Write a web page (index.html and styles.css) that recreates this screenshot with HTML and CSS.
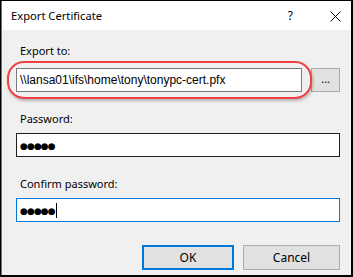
FILE: index.html
```html
<!DOCTYPE html>
<html lang="en">
  <head>
    <meta charset="UTF-8" />
    <title>Export Certificate</title>
    <link rel="stylesheet" href="styles.css">
  </head>
  <body>
    <div class="window">
      <!-- Title bar -->
      <div class="titlebar">
        <span class="title">Export Certificate</span>
        <span class="help">?</span>
        <svg class="close" width="11" height="11" viewBox="0 0 11 11">
          <path d="M0.5 0.5 L10.5 10.5 M10.5 0.5 L0.5 10.5" stroke="#000" stroke-width="1" fill="none" />
        </svg>
      </div>

      <div class="content">
        <div class="field first">
          <div class="label">Export to:</div>
          <div class="path-row">
            <div class="textbox path">\\lansa01\ifs\home\tony\tonypc-cert.pfx</div>
            <div class="browse">...</div>
            <div class="highlight"></div>
          </div>
        </div>

        <div class="field">
          <div class="label">Password:</div>
          <div class="textbox dark"><span class="dots">●●●●●</span></div>
        </div>

        <div class="field">
          <div class="label">Confirm password:</div>
          <div class="textbox focused"><span class="dots">●●●●●</span><span class="caret"></span></div>
        </div>

        <div class="actions">
          <div class="btn default">OK</div>
          <div class="btn">Cancel</div>
        </div>
      </div>
    </div>
  </body>
</html>
```

FILE: styles.css
```css
* {
  box-sizing: border-box;
}
body {
  margin: 0;
  font-family: "Noto Sans", "Open Sans", sans-serif;
  font-size: 11px;
  color: #000;
  background: #fff;
}
.window {
  width: 353px;
  height: 277px;
  border-top: 1px solid #000;
  border-left: 1px solid #000;
  border-right: 2px solid #000;
  border-bottom: 2px solid #000;
  background: #f0f0f0;
  box-shadow: inset 1px 0 0 #e8483e;
  display: flex;
  flex-direction: column;
}
.titlebar {
  height: 29px;
  background: #fff;
  margin-left: 1px;
  display: flex;
  align-items: center;
  padding-left: 9px;
}
.title {
  flex: 1;
  font-size: 11.2px;
  line-height: 16px;
}
.help {
  font-size: 12px;
  margin-right: 37px;
}
.close {
  margin-right: 10px;
  margin-top: 1px;
}
.content {
  flex: 1;
  padding: 13px 11px 0 15px;
  display: flex;
  flex-direction: column;
}
.label {
  line-height: 16px;
  padding-left: 4px;
  margin-bottom: 6px;
}
.field {
  margin-bottom: 19px;
}
.field.first .label {
  margin-bottom: 9px;
}
.path-row {
  position: relative;
  display: flex;
  gap: 9px;
}
.textbox {
  height: 24px;
  background: #fff;
  border: 1px solid #7a7a7a;
  padding-left: 3px;
  display: flex;
  align-items: center;
  line-height: 16px;
  white-space: nowrap;
}
.textbox.path {
  width: 289px;
  font-family: "Liberation Sans", Arial, sans-serif;
  font-size: 12px;
}
.textbox.dark {
  border-color: #1e1e1e;
}
.textbox.focused {
  border-color: #0078d7;
}
.dots {
  font-family: "DejaVu Sans", sans-serif;
  font-size: 9px;
  letter-spacing: -0.9px;
  padding-top: 1px;
}
.caret {
  width: 1px;
  height: 15px;
  background: #000;
  margin-left: 1px;
}
.browse {
  width: 29px;
  height: 24px;
  background: #e1e1e1;
  border: 1px solid #adadad;
  text-align: center;
  line-height: 20px;
}
/* red annotation ring around the path box */
.highlight {
  position: absolute;
  left: -9px;
  top: -7px;
  width: 305px;
  height: 38px;
  border: 2.5px solid #ee4040;
  border-radius: 17px;
  box-shadow: 1px 2px 3px rgba(0, 0, 0, 0.25);
}
.actions {
  margin-top: 4px;
  display: flex;
  justify-content: flex-end;
  gap: 9px;
}
.btn {
  width: 97px;
  height: 25px;
  background: #e1e1e1;
  border: 1px solid #adadad;
  text-align: center;
  line-height: 23px;
  font-size: 12px;
}
.btn.default {
  width: 92px;
  border: 2px solid #0078d7;
  line-height: 21px;
}
```
